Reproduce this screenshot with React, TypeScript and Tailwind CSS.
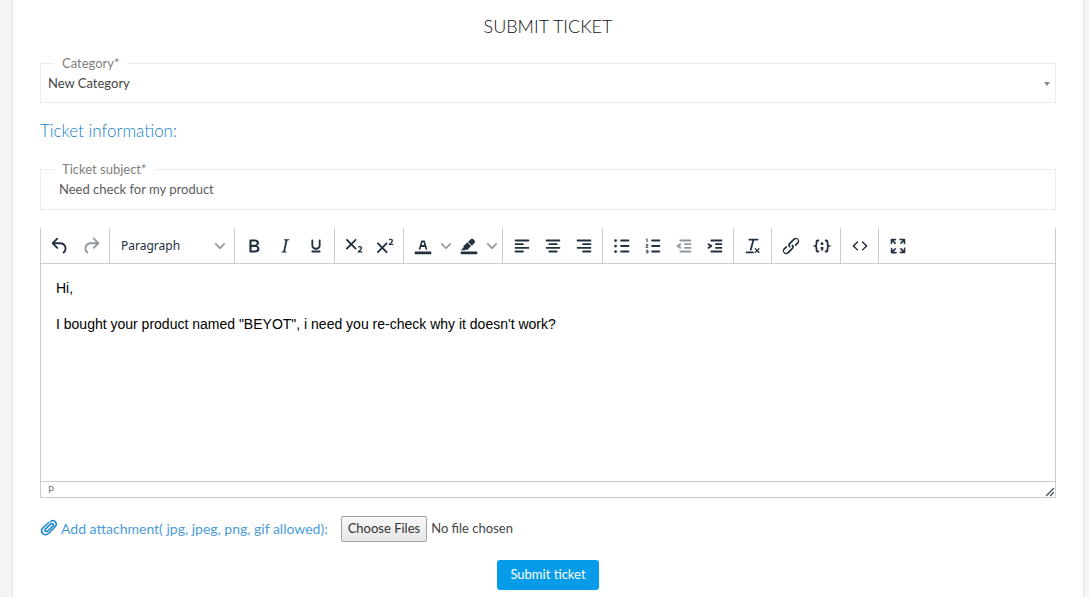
import React from "react";

const LINK =
  "M6.2 12.3a1 1 0 011.4 1.4l-2.1 2a2 2 0 102.7 2.8l4.8-4.8a1 1 0 000-1.4 1 1 0 111.4-1.3 2.9 2.9 0 010 4L9.6 20a3.9 3.9 0 01-5.5-5.5l2-2zm11.6-.6a1 1 0 01-1.4-1.4l2-2a2 2 0 10-2.6-2.8L11 10.3a1 1 0 000 1.4A1 1 0 119.6 13a2.9 2.9 0 010-4L14.4 4a3.9 3.9 0 015.5 5.5l-2 2z";
const UNDO =
  "M6.4 8H12c3.7 0 6.2 2 6.8 5.1.6 2.7-.4 5.6-2.3 6.8a1 1 0 01-1-1.8c1.1-.6 1.8-2.7 1.4-4.6-.5-2.1-2.1-3.5-4.9-3.5H6.4l3.3 3.3a1 1 0 11-1.4 1.4l-5-5a1 1 0 010-1.4l5-5a1 1 0 011.4 1.4L6.4 8z";
const REDO =
  "M17.6 10H12c-2.8 0-4.4 1.4-4.9 3.5-.4 2 .3 4 1.4 4.6a1 1 0 11-1 1.8c-2-1.2-2.9-4.1-2.3-6.8.6-3 3-5.1 6.8-5.1h5.6l-3.3-3.3a1 1 0 111.4-1.4l5 5a1 1 0 010 1.4l-5 5a1 1 0 01-1.4-1.4l3.3-3.3z";
const BOLD =
  "M7.8 19c-.3 0-.5 0-.6-.2l-.2-.5V5.7c0-.2 0-.4.2-.5l.6-.2h5c1.5 0 2.7.3 3.5 1 .7.6 1.1 1.4 1.1 2.5a3 3 0 01-.6 1.9c-.4.6-1 1-1.6 1.2.4.1.9.3 1.3.6s.8.7 1 1.2c.4.4.5 1 .5 1.6 0 1.3-.4 2.3-1.3 3-.8.7-2.1 1-3.8 1H7.8zm5-8.3c.6 0 1.2-.1 1.6-.5.4-.3.6-.7.6-1.3 0-1.1-.8-1.7-2.3-1.7H9.3v3.5h3.4zm.5 6c.7 0 1.3-.1 1.7-.4.4-.4.6-.9.6-1.5s-.2-1-.7-1.4c-.4-.3-1-.4-2-.4H9.4v3.8h4z";
const ITALIC =
  "M16.7 4.7l-.1.9h-.3c-.6 0-1 0-1.4.3-.3.3-.4.6-.5 1.1l-2.1 9.8v.6c0 .5.4.8 1.4.8h.2l-.2.8H8l.2-.8h.2c1.1 0 1.8-.5 2-1.5l2-9.8.1-.5c0-.6-.4-.8-1.4-.8h-.3l.2-.9h5.8z";
const UNDERLINE =
  "M16 5c.6 0 1 .4 1 1v5.5a4 4 0 01-.4 1.8l-1 1.4a5.3 5.3 0 01-5.5 1 5 5 0 01-1.6-1c-.5-.4-.8-.9-1.1-1.4a4 4 0 01-.4-1.8V6c0-.6.4-1 1-1s1 .4 1 1v5.5c0 .3 0 .6.2 1l.6.7a3.3 3.3 0 002.2.8 3.4 3.4 0 002.2-.8c.3-.2.4-.5.6-.8l.2-.9V6c0-.6.4-1 1-1zM8 17h8c.6 0 1 .4 1 1s-.4 1-1 1H8a1 1 0 010-2z";
const SUBSCRIPT =
  "M10.4 10l4.6 4.6-1.4 1.4L9 11.4 4.4 16 3 14.6 7.6 10 3 5.4 4.4 4 9 8.6 13.6 4 15 5.4 10.4 10zM21 19h-5v-1l1-.8 1.7-1.6c.3-.4.5-.8.5-1.2 0-.3 0-.6-.2-.7-.2-.2-.5-.3-.9-.3a2 2 0 00-.8.2l-.7.3-.4-1.1 1-.6 1.2-.2c.8 0 1.4.3 1.8.7.4.4.6.9.6 1.5s-.2 1.1-.5 1.6a8 8 0 01-1.3 1.3l-.6.6h2.6V19z";
const SUPERSCRIPT =
  "M15 9.4L10.4 14l4.6 4.6-1.4 1.4L9 15.4 4.4 20 3 18.6 7.6 14 3 9.4 4.4 8 9 12.6 13.6 8 15 9.4zm5.9 1.6h-5v-1l1-.8 1.7-1.6c.3-.5.5-.9.5-1.3 0-.3 0-.5-.2-.7-.2-.2-.5-.3-.9-.3l-.8.2-.7.4-.4-1.2c.2-.2.5-.4 1-.5.3-.2.8-.2 1.2-.2.8 0 1.4.2 1.8.6.4.4.6 1 .6 1.6 0 .5-.2 1-.5 1.5l-1.3 1.4-.6.5h2.6V11z";
const FORECOLOR =
  "M3 18h18v3H3zM8.7 16h-.8a.5.5 0 01-.5-.6l2.7-9c.1-.3.3-.4.5-.4h2.8c.2 0 .4.1.5.4l2.7 9a.5.5 0 01-.5.6h-.8a.5.5 0 01-.4-.4l-.7-2.2c0-.3-.3-.4-.5-.4h-3.4c-.2 0-.4.1-.5.4l-.7 2.2c0 .3-.2.4-.4.4zm2.6-7.6l-.6 2a.5.5 0 00.5.6h1.6a.5.5 0 00.5-.6l-.6-2c0-.3-.3-.4-.5-.4h-.4c-.2 0-.4.1-.5.4z";
const HIGHLIGHT =
  "M3 18h18v3H3zM7.7 16.7H3l3.3-3.3-.7-.8L10.2 8l4 4.1-4 4.2c-.2.2-.6.2-.8 0l-.6-.7-1.1 1.1zm5-7.5L11 7.4l3-2.9a2 2 0 012.6 0L18 6c.7.7.7 2 0 2.7l-2.9 2.9-1.8-1.8-.5-.6";
const NUMERALS =
  "M6 4v3.5c0 .3-.2.5-.5.5a.5.5 0 01-.5-.5V5h-.5a.5.5 0 010-1H6zm-1 8.8l.2.2h1.3c.3 0 .5.2.5.5s-.2.5-.5.5H4.9a1 1 0 01-.9-1V13c0-.4.3-.8.6-1l1.2-.4.2-.3a.2.2 0 00-.2-.2H4.5a.5.5 0 01-.5-.5c0-.3.2-.5.5-.5h1.6c.5 0 .9.4.9 1v.1c0 .4-.3.8-.6 1l-1.2.4-.2.3zM7 17v2c0 .6-.4 1-1 1H4.5a.5.5 0 010-1h1.2c.2 0 .3-.1.3-.3 0-.2-.1-.3-.3-.3H4.4a.4.4 0 110-.8h1.3c.2 0 .3-.1.3-.3 0-.2-.1-.3-.3-.3H4.5a.5.5 0 110-1H6c.6 0 1 .4 1 1z";
const OUTDENT_ARROW =
  "M8.6 13.2a1 1 0 01-1.2 1.6l-3-2a1 1 0 010-1.6l3-2a1 1 0 011.2 1.6L6.8 12l1.8 1.2z";
const INDENT_ARROW =
  "M4.4 13.2L6.2 12l-1.8-1.2a1 1 0 011.2-1.6l3 2a1 1 0 010 1.6l-3 2a1 1 0 11-1.2-1.6z";
const CLEAR =
  "M13.2 6a1 1 0 010 .2l-2.6 10a1 1 0 01-1 .8h-.2a.8.8 0 01-.8-1l2.6-10H8a1 1 0 110-2h9a1 1 0 010 2h-3.8zM5 18h7a1 1 0 010 2H5a1 1 0 010-2zm13 1.5L16.5 18 15 19.5a.7.7 0 01-1-1l1.5-1.5-1.5-1.5a.7.7 0 011-1l1.5 1.5 1.5-1.5a.7.7 0 011 1L17.5 17l1.5 1.5a.7.7 0 01-1 1z";
const SOURCE =
  "M9.8 15.7c.3.3.3.8 0 1-.3.4-.9.4-1.2 0l-4.4-4.1a.8.8 0 010-1.2l4.4-4.2c.3-.3.9-.3 1.2 0 .3.3.3.8 0 1.1L6 12l3.8 3.7zM14.2 15.7c-.3.3-.3.8 0 1 .4.4.9.4 1.2 0l4.4-4.1c.3-.3.3-.9 0-1.2l-4.4-4.2a.8.8 0 00-1.2 0c-.3.3-.3.8 0 1.1L18 12l-3.8 3.7z";
const FULLSCREEN =
  "M15.3 10l-1.2-1.3 2.9-3h-2.3a.9.9 0 110-1.7H19c.5 0 .9.4.9.9v4.4a.9.9 0 11-1.8 0V7l-2.9 3zm0 4l3 3v-2.3a.9.9 0 111.7 0V19c0 .5-.4.9-.9.9h-4.4a.9.9 0 110-1.8H17l-3-2.9 1.3-1.2zM10 15.4l-2.9 3h2.3a.9.9 0 110 1.7H5a.9.9 0 01-.9-.9v-4.4a.9.9 0 111.8 0V17l2.9-3 1.2 1.3zM8.700 10L5.700 7v2.300a.9.9 0 01-1.700 0V5c0-.5.4-.9.9-.9h4.400a.9.9 0 010 1.800H7l3 2.900-1.300 1.200z";

function Icon({ d, lines, children }: { d?: string; lines?: string; children?: React.ReactNode }) {
  return (
    <svg viewBox="0 0 24 24" className="size-[22px] shrink-0 fill-current" aria-hidden="true">
      {d && <path d={d} />}
      {lines && <path d={lines} fill="none" stroke="currentColor" strokeWidth="2" strokeLinecap="round" />}
      {children}
    </svg>
  );
}

function Chevron() {
  return (
    <svg viewBox="0 0 10 10" className="size-[10px] shrink-0 fill-[#8f959c]" aria-hidden="true">
      <path d="M8.7 2.2c.3-.3.8-.3 1 0 .4.4.4.9 0 1.2L5.7 7.8c-.3.3-.9.3-1.2 0L.2 3.4a.8.8 0 010-1.2c.3-.3.8-.3 1.1 0L5 6l3.7-3.8z" />
    </svg>
  );
}

function Tool({ label, disabled, children }: { label: string; disabled?: boolean; children: React.ReactNode }) {
  return (
    <button
      type="button"
      aria-label={label}
      disabled={disabled}
      className="flex h-[34px] w-[31px] items-center justify-center text-[#222f3e] disabled:text-[#222f3e]/50"
    >
      {children}
    </button>
  );
}

function SplitTool({ label, children }: { label: string; children: React.ReactNode }) {
  return (
    <div className="flex">
      <Tool label={label}>{children}</Tool>
      <button type="button" aria-label={`${label} menu`} className="flex h-[34px] w-[15px] items-center justify-center">
        <Chevron />
      </button>
    </div>
  );
}

function Group({ children, last }: { children: React.ReactNode; last?: boolean }) {
  return (
    <div
      className={
        last
          ? "flex h-[35px] shrink-0 items-center px-[3px]"
          : "flex h-[35px] shrink-0 items-center border-r border-[#cccccc] px-[3px]"
      }
    >
      {children}
    </div>
  );
}

function Toolbar() {
  return (
    <div role="toolbar" aria-label="Formatting" className="flex flex-wrap border-b border-[#cccccc]">
      <Group>
        <Tool label="Undo"><Icon d={UNDO} /></Tool>
        <Tool label="Redo" disabled><Icon d={REDO} /></Tool>
      </Group>
      <Group>
        <button
          type="button"
          className="flex h-[34px] w-[118px] items-center justify-between pr-1.5 pl-2 font-['Noto_Sans',sans-serif] text-[12px] text-[#222f3e]"
        >
          Paragraph
          <Chevron />
        </button>
      </Group>
      <Group>
        <Tool label="Bold"><Icon d={BOLD} /></Tool>
        <Tool label="Italic"><Icon d={ITALIC} /></Tool>
        <Tool label="Underline"><Icon d={UNDERLINE} /></Tool>
      </Group>
      <Group>
        <Tool label="Subscript"><Icon d={SUBSCRIPT} /></Tool>
        <Tool label="Superscript"><Icon d={SUPERSCRIPT} /></Tool>
      </Group>
      <Group>
        <SplitTool label="Text color"><Icon d={FORECOLOR} /></SplitTool>
        <SplitTool label="Background color"><Icon d={HIGHLIGHT} /></SplitTool>
      </Group>
      <Group>
        <Tool label="Align left"><Icon lines="M5 6h14M5 10h8M5 14h14M5 18h8" /></Tool>
        <Tool label="Align center"><Icon lines="M5 6h14M8 10h8M5 14h14M8 18h8" /></Tool>
        <Tool label="Align right"><Icon lines="M5 6h14M11 10h8M5 14h14M11 18h8" /></Tool>
      </Group>
      <Group>
        <Tool label="Bullet list">
          <Icon lines="M11 6h8M11 12h8M11 18h8">
            <circle cx="5" cy="6" r="1.5" />
            <circle cx="5" cy="12" r="1.5" />
            <circle cx="5" cy="18" r="1.5" />
          </Icon>
        </Tool>
        <Tool label="Numbered list"><Icon d={NUMERALS} lines="M11 6h8M11 12h8M11 18h8" /></Tool>
        <Tool label="Decrease indent" disabled><Icon d={OUTDENT_ARROW} lines="M8 6h11M13 10h6M13 14h6M8 18h11" /></Tool>
        <Tool label="Increase indent"><Icon d={INDENT_ARROW} lines="M8 6h11M13 10h6M13 14h6M8 18h11" /></Tool>
      </Group>
      <Group>
        <Tool label="Clear formatting"><Icon d={CLEAR} /></Tool>
      </Group>
      <Group>
        <Tool label="Insert link"><Icon d={LINK} /></Tool>
        <Tool label="Code sample">
          <Icon>
            <path
              d="M8 6H7.4Q6 6 6 7.5v2Q6 11.5 4.5 12Q6 12.5 6 14.5v2Q6 18 7.4 18H8M16 6h.6Q18 6 18 7.5v2Q18 11.5 19.5 12Q18 12.5 18 14.5v2Q18 18 16.6 18H16"
              fill="none"
              stroke="currentColor"
              strokeWidth="2"
              strokeLinecap="round"
            />
            <circle cx="12" cy="9.5" r="1.6" />
            <path d="M10.5 13h3v2c0 1.3-.7 2.1-2 2.4l-.5-.9c.5-.2.8-.5.8-1h-1.3z" />
          </Icon>
        </Tool>
      </Group>
      <Group>
        <Tool label="Source code"><Icon d={SOURCE} /></Tool>
      </Group>
      <Group last>
        <Tool label="Fullscreen"><Icon d={FULLSCREEN} /></Tool>
      </Group>
    </div>
  );
}

export default function App() {
  return (
    <div className="flex min-h-screen bg-[#f4f4f4] pr-[5px] pl-3 font-['Lato',sans-serif] text-[13px] text-[#444444]">
      <main className="flex-1 border-x border-[#e4e4e4] bg-white px-[27px] pt-3.5 pb-2">
        <form onSubmit={(e) => e.preventDefault()}>
          <h1 className="text-center text-[18px] leading-6 font-light text-[#111111]">SUBMIT TICKET</h1>

          <fieldset className="relative mt-[15px] border border-[#ebebeb] pb-[9px]">
            <legend className="ml-[13px] px-2 leading-5 text-[#808080]">
              <label htmlFor="category">Category*</label>
            </legend>
            <select id="category" className="block h-5 w-full appearance-none bg-transparent pl-[7px] leading-5">
              <option>New Category</option>
            </select>
            <span
              aria-hidden="true"
              className="pointer-events-none absolute right-[5px] bottom-4 border-x-[3px] border-t-4 border-x-transparent border-t-[#888888]"
            />
          </fieldset>

          <h2 className="mt-4 text-[17px] leading-6 font-light text-[#1480cc]">Ticket information:</h2>

          <fieldset className="mt-4 border border-[#ebebeb] pb-2.5">
            <legend className="ml-[13px] px-2 leading-5 text-[#808080]">
              <label htmlFor="subject">Ticket subject*</label>
            </legend>
            <input
              id="subject"
              type="text"
              defaultValue="Need check for my product"
              className="block h-5 w-full bg-transparent px-[18px] text-[#5c5c5c]"
            />
          </fieldset>

          <div className="mt-[18px] border-x border-b border-[#cccccc]">
            <Toolbar />
            <textarea
              aria-label="Message"
              defaultValue={'Hi,\n\nI bought your product named "BEYOT", i need you re-check why it doesn\'t work?'}
              className="block h-[217px] w-full resize-none px-[15px] pt-[15px] font-['Liberation_Sans',sans-serif] text-[14px] leading-[18px] text-black"
            />
            <div className="flex h-4 items-center justify-between border-t border-[#cccccc] pl-[7px] text-[10px] text-[#222f3e]/70">
              <span>P</span>
              <svg viewBox="0 0 10 10" className="size-[10px] self-end fill-[#222f3e]/80" aria-hidden="true">
                <path d="M8 1.1A.5.5 0 119 2L2 9A.5.5 0 111 8l7-7zM8 5.1A.5.5 0 119 6L6 9A.5.5 0 115 8l3-3z" />
              </svg>
            </div>
          </div>

          <div className="mt-[18px] flex items-center">
            <svg viewBox="0 0 18 18" className="mb-0.5 size-[18px] shrink-0" aria-hidden="true">
              <path
                d="M10.5 5.2L5.600 9.900c-1.500 1.700.5 3.500 2 2.200L13.400 6.600M10.600 2.500C13.300-.1 18.300 3.800 15.300 7.500L9 14c-4.300 4.200-10-.6-6-5.300L8.700 3.500M10.500 5.200c1.500-1.300 3.700.2 2.900 1.400"
                fill="none"
                stroke="#2088d0"
                strokeWidth="1.600"
                strokeLinecap="round"
              />
            </svg>
            <label htmlFor="files" className="mb-0.5 ml-[3px] text-[14px] text-[#4a9bd9]">
              Add attachment( jpg, jpeg, png, gif allowed):
            </label>
            <input
              id="files"
              type="file"
              multiple
              className="ml-[13px] file:mr-1 file:h-[26px] file:rounded-[2px] file:border file:border-solid file:border-[#a0a0a0] file:bg-linear-to-b file:from-[#f8f8f8] file:to-[#e6e6e6] file:px-1.5 file:text-[#333333]"
            />
          </div>

          <div className="mt-[18px] flex justify-center">
            <button type="submit" className="h-[30px] rounded-[3px] bg-[#069ce8] px-[13px] text-white">
              Submit ticket
            </button>
          </div>
        </form>
      </main>
    </div>
  );
}
